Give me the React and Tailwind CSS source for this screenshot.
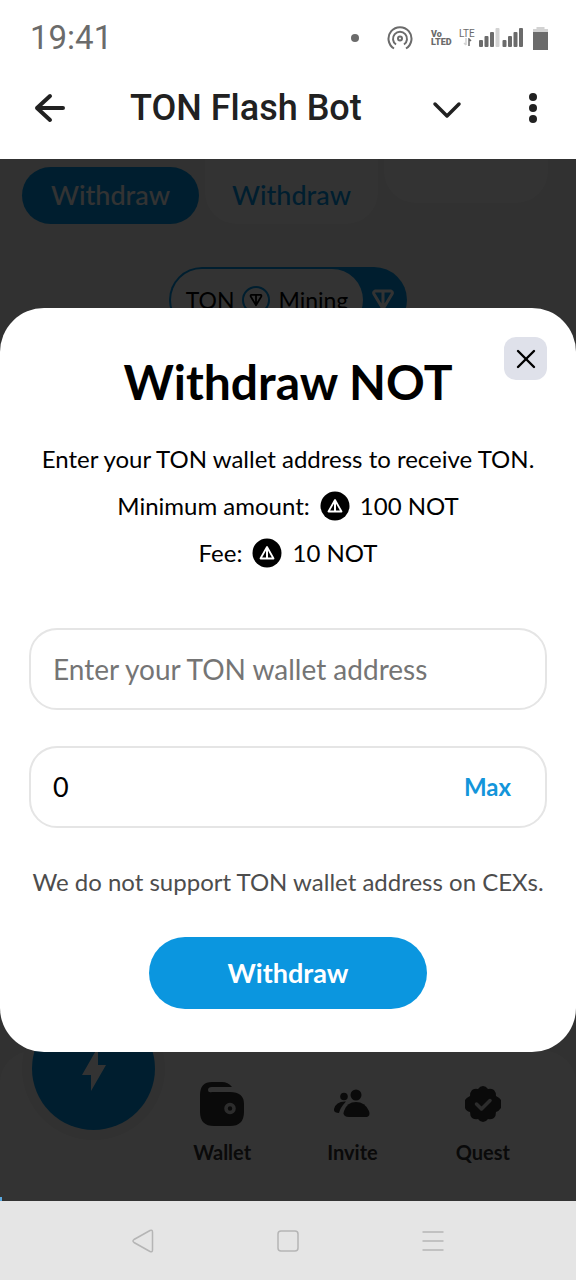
import React, { useState } from 'react'
import { X } from 'lucide-react'

function StatusBar() {
  return (
    <div className="flex h-[72px] items-center justify-between pt-1 pr-7 pl-[30px] text-[#6b6b6b]">
      <span className="font-[Roboto,sans-serif] text-[33px] leading-9">19:41</span>
      <div className="flex items-center">
        <span className="mr-7 size-2 rounded-full bg-[#6b6b6b]" />
        <svg className="mr-[18px] h-[26px] w-[26px]" viewBox="0 0 26 26" fill="none" stroke="currentColor" strokeWidth="2">
          <circle cx="13" cy="13.500" r="2" />
          <path d="M7 23.500A11.500 11.500 0 1 1 19 23.500" />
          <path d="M9 19.500A7 7 0 1 1 17 19.500" />
        </svg>
        <span className="mr-2 flex w-5 flex-col font-[Roboto,sans-serif] text-[9px] leading-2 font-black">
          <span>Vo</span>
          <span>LTED</span>
        </span>
        <span className="flex w-5 flex-col font-[Roboto,sans-serif] text-[10px] leading-2">
          <span>LTE</span>
          <svg className="ml-1 h-2 w-3" viewBox="0 0 12 8" fill="none" stroke="currentColor" strokeWidth="1.500">
            <path d="M3 0v7M1 5l2 2" stroke="#d2d2d2" />
            <path d="M6 8V1l2 2" />
          </svg>
        </span>
        <svg className="mr-2.5 h-5 w-11" viewBox="0 0 44 20" fill="currentColor">
          <rect x="0" y="12" width="4" height="7" rx="1" />
          <rect x="5.500" y="8" width="4" height="11" rx="1" />
          <rect x="11" y="4" width="4" height="15" rx="1" />
          <rect x="16.500" y="0" width="4" height="19" rx="1" fill="#d2d2d2" />
          <rect x="23.500" y="12" width="4" height="7" rx="1" />
          <rect x="29" y="8" width="4" height="11" rx="1" />
          <rect x="34.500" y="4" width="4" height="15" rx="1" />
          <rect x="40" y="0" width="4" height="19" rx="1" />
        </svg>
        <svg className="h-[23px] w-[15px]" viewBox="0 0 15 23" fill="currentColor">
          <path d="M3.500 0h8v2H15v4H0V2h3.500z" fill="#d2d2d2" />
          <rect y="5" width="15" height="18" />
        </svg>
      </div>
    </div>
  )
}

function Header() {
  return (
    <header className="flex h-[87px] items-center pr-[33px] pb-[15px] pl-[30px] text-[#212121]">
      <button aria-label="Back" className="w-[100px]">
        <svg className="size-10" viewBox="0 0 40 40" fill="none" stroke="currentColor" strokeWidth="4" strokeLinecap="round" strokeLinejoin="round">
          <path d="M33 20H7M20 8L7 20l13 12" />
        </svg>
      </button>
      <h1 className="flex-1 font-[Roboto,sans-serif] text-4xl leading-10 font-medium">TON Flash Bot</h1>
      <button aria-label="Collapse" className="mr-14">
        <svg className="size-10" viewBox="0 0 40 40" fill="none" stroke="currentColor" strokeWidth="3.500" strokeLinecap="round" strokeLinejoin="round">
          <path d="M8 16l12 12 12-12" />
        </svg>
      </button>
      <button aria-label="More options">
        <svg className="h-8 w-5" viewBox="0 0 20 32" fill="currentColor">
          <circle cx="10" cy="5" r="4" />
          <circle cx="10" cy="16" r="4" />
          <circle cx="10" cy="27" r="4" />
        </svg>
      </button>
    </header>
  )
}

function NotIcon() {
  return (
    <svg className="size-[30px]" viewBox="0 0 30 30" fill="none" stroke="#fff" strokeLinejoin="round">
      <circle cx="15" cy="15" r="14.500" fill="#000" stroke="none" />
      <path d="M15 9L8.500 20.500h13z" strokeWidth="1.800" />
      <path d="M15 9v11" strokeWidth="2" />
    </svg>
  )
}

function TonMark({ className }) {
  return (
    <svg className={className} viewBox="0 0 24 24" fill="none" stroke="currentColor" strokeWidth="3" strokeLinejoin="round">
      <path d="M4 3h16q2 1 1 3l-9 15L3 6Q2 4 4 3zM12 3v18" />
    </svg>
  )
}

function Balances() {
  return (
    <div className="grid grid-cols-[177fr_173fr_164fr] items-start gap-1.5 pr-7 pl-[22px]">
      <div className="flex pt-2">
        <button className="h-[57px] flex-1 rounded-full bg-[#0098ea] text-[27px] font-medium text-white">Withdraw</button>
      </div>
      <button className="h-[65px] rounded-b-[32px] bg-white pt-2 text-[27px] font-medium text-[#0098ea]">Withdraw</button>
      <div className="h-11 rounded-b-[32px] bg-white" />
    </div>
  )
}

function MiningSwitch() {
  return (
    <div className="mx-auto mt-[43px] flex h-[66px] w-[238px] items-center rounded-full bg-[#0098ea] p-0.5">
      <div className="flex h-full w-[192px] items-center justify-center gap-2 rounded-full bg-white text-[23px] text-black">
        <span>TON</span>
        <span className="flex size-7 items-center justify-center rounded-full border-2 border-[#0098ea]">
          <TonMark className="size-3.5" />
        </span>
        <span>Mining</span>
      </div>
      <TonMark className="ml-2 size-6 text-white" />
    </div>
  )
}

function WalletIcon() {
  return (
    <svg className="size-11" viewBox="0 0 44 44">
      <path d="M12 0h10q6 0 10 5H12q-4 0-4 3t4 2h18q14 0 14 12v8q0 14-14 14H14Q0 44 0 30V13Q0 0 12 0z" fill="#333" />
      <circle cx="30" cy="26.500" r="4" fill="#333" stroke="#ddd" strokeWidth="3.500" />
    </svg>
  )
}

function InviteIcon() {
  return (
    <svg className="h-11 w-9" viewBox="0 0 36 44" fill="#333">
      <circle cx="22" cy="13" r="5.500" />
      <circle cx="10" cy="14.500" r="3.800" />
      <path d="M15 35q-7 0-5-6 3-9 12-9t13 9q2 6-4 6z" />
      <path d="M12 19.500q-10-.500-12 7.500-.500 4 5 4 1-5 7-11.500z" />
    </svg>
  )
}

function QuestIcon() {
  return (
    <svg className="h-11 w-9" viewBox="0 0 36 44">
      <path
        d="M18 4q3 0 5 3 3-1 6 1 2 2 2 6 4 2 5 4v8q-2 3-5 4 0 4-2 6-3 2-6 1-2 3-5 3t-5-3q-3 1-6-1-2-2-2-6-4-1-5-4v-8q1-2 5-4 0-4 2-6 3-2 6-1 2-3 5-3z"
        fill="#333"
      />
      <path d="M11.500 22l5 5L25 18.500" fill="none" stroke="#ddd" strokeWidth="3.500" strokeLinecap="round" strokeLinejoin="round" />
    </svg>
  )
}

const tabs = [
  { name: 'Wallet', Icon: WalletIcon },
  { name: 'Invite', Icon: InviteIcon },
  { name: 'Quest', Icon: QuestIcon },
]

function TabBar() {
  return (
    <nav className="flex items-start rounded-t-[32px] bg-white pr-7 pl-[22px]">
      <div className="-mt-[54px] -mr-2 mb-[61px] rounded-full bg-[#f2f2f2] p-2.5">
        <button aria-label="Boost" className="flex size-[123px] items-center justify-center rounded-full bg-[#0098ea]">
          <svg className="h-11 w-7" viewBox="0 0 28 44" fill="#fff">
            <path d="M18 0v18h8L11 44V28H2z" />
          </svg>
        </button>
      </div>
      <div className="grid flex-1 grid-cols-3 pt-[31px]">
        {tabs.map(({ name, Icon }) => (
          <a key={name} href="#" className="flex flex-col items-center gap-3 text-xl font-bold text-[#333]">
            <Icon />
            {name}
          </a>
        ))}
      </div>
    </nav>
  )
}

function WithdrawModal() {
  const [address, setAddress] = useState('')
  const [amount, setAmount] = useState('0')

  return (
    <div className="relative flex w-full flex-col items-center rounded-[44px] bg-white px-[29px] pt-11 pb-[43px] text-black">
      <button aria-label="Close" className="absolute top-[29px] right-[29px] flex size-[43px] items-center justify-center rounded-xl bg-[#dfe1ea]">
        <X size={32} strokeWidth={1.8} />
      </button>
      <h2 className="text-5xl leading-[60px] font-bold">Withdraw NOT</h2>
      <p className="mt-[23px] text-2xl leading-[47px] whitespace-nowrap">Enter your TON wallet address to receive TON.</p>
      <p className="flex items-center gap-2.5 text-2xl leading-[47px]">
        Minimum amount: <NotIcon /> 100 NOT
      </p>
      <p className="flex items-center gap-2.5 text-2xl leading-[47px]">
        Fee: <NotIcon /> 10 NOT
      </p>
      <input
        aria-label="TON wallet address"
        placeholder="Enter your TON wallet address"
        value={address}
        onChange={(e) => setAddress(e.target.value)}
        className="mt-[52px] h-[82px] w-full rounded-[28px] border-2 border-[#e5e5e5] px-[22px] text-[28px] outline-none placeholder:text-[#757575]"
      />
      <div className="mt-9 flex h-[82px] w-full items-center rounded-[28px] border-2 border-[#e5e5e5] pr-[34px] pl-[22px]">
        <input
          aria-label="Amount"
          value={amount}
          onChange={(e) => setAmount(e.target.value)}
          className="min-w-0 flex-1 text-[27px] outline-none"
        />
        <button className="text-2xl font-bold text-[#1395da]">Max</button>
      </div>
      <p className="mt-[30px] text-2xl leading-[47px] whitespace-nowrap text-[#4d4d4d]">We do not support TON wallet address on CEXs.</p>
      <button className="mt-8 h-[72px] w-[278px] rounded-full bg-[#0b96df] text-[27px] font-bold text-white">Withdraw</button>
    </div>
  )
}

function SystemNav() {
  return (
    <div className="flex h-[79px] items-center justify-center gap-[121px] bg-[#e5e5e5] text-[#b5b5b5]">
      <button aria-label="Back">
        <svg className="size-6" viewBox="0 0 24 24" fill="none" stroke="currentColor" strokeWidth="1.500">
          <path d="M19 1.500L3 10.500q-2 1.500 0 3l16 9q2.500 1 2.500-1.500V3q0-2.500-2.500-1.500z" />
        </svg>
      </button>
      <button aria-label="Home">
        <svg className="size-6" viewBox="0 0 24 24" fill="none" stroke="currentColor" strokeWidth="1.500">
          <rect x="2" y="2" width="20" height="20" rx="3" />
        </svg>
      </button>
      <button aria-label="Recent apps">
        <svg className="size-6" viewBox="0 0 24 24" fill="none" stroke="currentColor" strokeWidth="1.500">
          <path d="M1.500 3h21M1.500 12h21M1.500 21h21" />
        </svg>
      </button>
    </div>
  )
}

export default function App() {
  return (
    <div className="flex min-h-screen flex-col bg-white font-[Lato,sans-serif]">
      <StatusBar />
      <Header />
      <main className="relative grid flex-1">
        <div className="col-start-1 row-start-1 flex flex-col justify-between bg-[#f2f2f2]">
          <div>
            <Balances />
            <MiningSwitch />
          </div>
          <TabBar />
        </div>
        <div className="z-10 col-start-1 row-start-1 flex items-center bg-black/80">
          <WithdrawModal />
        </div>
        {/* page load progress */}
        <div className="absolute bottom-0 left-0 z-20 h-1 w-0.5 bg-[#5aa9e0]" />
      </main>
      <SystemNav />
    </div>
  )
}
